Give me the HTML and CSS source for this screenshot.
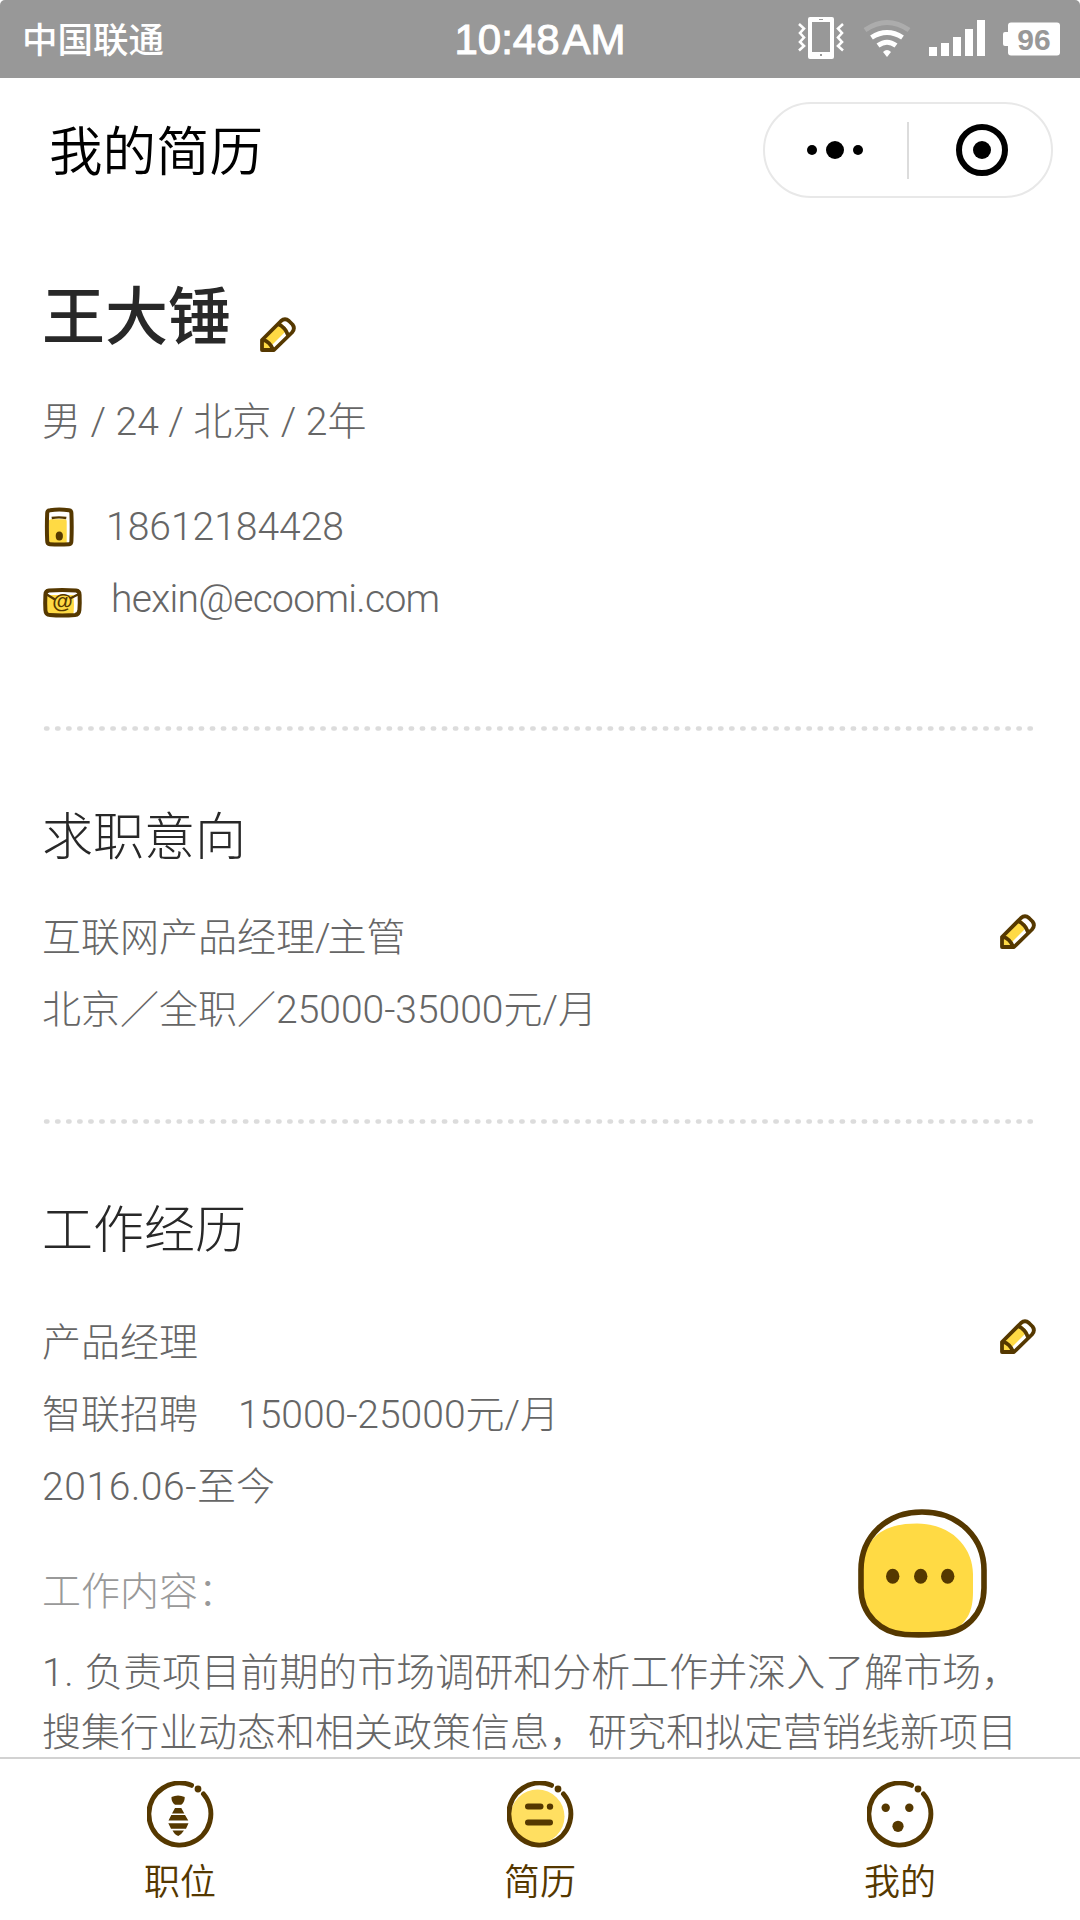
FILE: index.html
```html
<!DOCTYPE html>
<html lang="zh-CN">
<head>
  <meta charset="UTF-8">
  <meta name="viewport" content="width=device-width, initial-scale=1.0">
  <title>我的简历</title>
  <link rel="stylesheet" href="styles.css">
</head>
<body>

  <!-- shared icons -->
  <svg class="defs" width="0" height="0">
    <symbol id="pencil" viewBox="0 0 38 38">
      <path d="M3 34V24L21 6L31 16L14 33Z" fill="#ffda44"/>
      <path d="M15 33L32 16L29 13L11 31Z" fill="#fff"/>
      <path d="M26 4L32 9L31 13L27 9Z" fill="#fff"/>
      <path d="M3 34V24L22 5Q26 1.500 30 5L33.500 8.500Q36.500 12.500 33 16.500L15 34ZM19 8Q26 11 29 19M4 23.500Q11 26 14 33.500" fill="none" stroke="#553800" stroke-width="3.800" stroke-linejoin="round"/>
    </symbol>
    <symbol id="ring" viewBox="0 0 68 68">
      <path d="M56.5 13A31 31 0 1 1 44.5 4.3" fill="none" stroke="#553800" stroke-width="5" stroke-linecap="round"/>
      <circle cx="51" cy="8" r="3.4" fill="#553800"/>
    </symbol>
  </svg>

  <div class="phone">
    <div class="status">
      <span class="carrier">中国联通</span>
      <span class="time">10:48<i></i>AM</span>
      <svg class="status-icons" width="264" height="78" viewBox="0 0 264 78">
        <path fill="#fff" fill-rule="evenodd" d="M10 17H32Q34 17 34 19V57Q34 59 32 59H10Q8 59 8 57V19Q8 17 10 17ZM12 22V52H30V22ZM19 19V20H23V19ZM20 54V56H22V54Z"/>
        <path d="M-1 24L4 28.500L0 33L4 37.500L0 42L4 46L-1 50.500M43 24L38 28.500L42 33L38 37.500L42 42L38 46L43 50.500" fill="none" stroke="#fff" stroke-width="2.600"/>
        <g fill="none" stroke="#fff" stroke-width="5">
          <path d="M65 30Q87 15 109 30" opacity=".2"/>
          <path d="M71.500 37.500Q87 27.500 102.500 37.500"/>
          <path d="M78 45.500Q87 39 96 45.500"/>
        </g>
        <path d="M83 52Q87 48 91 52L87 57Z" fill="#fff"/>
        <path fill="#fff" d="M129 47h8v9h-8zM141 43h8v13h-8zM153 37h8v19h-8zM165 29h8v27h-8zM177 20h8v36h-8z"/>
        <rect x="208" y="22.500" width="52" height="33" rx="3" fill="#fff"/>
        <rect x="203" y="32" width="8" height="14" rx="2" fill="#fff"/>
        <text class="battery" x="234" y="50" text-anchor="middle">96</text>
      </svg>
    </div>

    <header class="navbar">
      <h1>我的简历</h1>
      <div class="capsule">
        <svg width="48" height="20" viewBox="0 0 48 20">
          <circle cx="5" cy="10" r="5"/><circle cx="28" cy="10" r="9"/><circle cx="51" cy="10" r="5"/>
        </svg>
        <i class="split"></i>
        <svg width="52" height="52" viewBox="0 0 52 52">
          <circle cx="26" cy="26" r="23" fill="none" stroke="#000" stroke-width="6"/>
          <circle cx="26" cy="26" r="9"/>
        </svg>
      </div>
    </header>

    <main class="resume">
      <section class="profile">
        <div class="name">
          <h2>王大锤</h2>
          <svg class="edit"><use href="#pencil"/></svg>
        </div>
        <p class="meta">男 / 24 / 北京 / 2年</p>
        <p class="contact">
          <svg width="31" height="41" viewBox="0 0 31 41">
            <path d="M4.700 14Q5 12 8 12.300H20Q23 12 22.700 15V36H4.700Z" fill="#ffda44"/>
            <path d="M6 3.200Q15 2 25 3.200Q27.400 3.500 27.400 6Q28 20 27.400 34Q27.400 37 25 37.200Q15 38 6 37.200Q3.200 37 3.200 34Q2.600 20 3.200 6Q3.200 3.500 6 3.200Z" fill="none" stroke="#553800" stroke-width="4"/>
            <path d="M7.700 11Q15 9.800 22.300 11" fill="none" stroke="#553800" stroke-width="2.400"/>
            <ellipse cx="15.300" cy="29" rx="3.600" ry="4.500" fill="#553800"/>
          </svg>
          <span>18612184428</span>
        </p>
        <p class="contact mail">
          <svg width="41" height="32" viewBox="0 0 41 32">
            <path d="M4 8H31Q33 18 31 29H4Z" fill="#ffda44"/>
            <path d="M7 3.600Q20 2.600 34 3.600Q37.600 4 37.600 8Q38 16 37.400 23Q37 27.600 33 28Q20 29 8 28Q3.600 28 3.400 23Q3 16 3.400 8Q3.400 4 7 3.600Z" fill="none" stroke="#553800" stroke-width="4"/>
            <path d="M4 7L13 12.500M37 7L28 11.500" stroke="#553800" stroke-width="2.400"/>
            <text class="at" x="20.500" y="21" text-anchor="middle">@</text>
          </svg>
          <span>hexin@ecoomi.com</span>
        </p>
      </section>

      <svg class="divider"><line x1="4" y1="2.500" x2="993" y2="2.500"/></svg>

      <section class="intent">
        <h3>求职意向</h3>
        <div class="item">
          <div>
            <p>互联网产品经理<span class="slash">/</span>主管</p>
            <p>北京／全职／25000-35000元/月</p>
          </div>
          <svg class="edit"><use href="#pencil"/></svg>
        </div>
      </section>

      <svg class="divider"><line x1="4" y1="2.500" x2="993" y2="2.500"/></svg>

      <section class="work">
        <h3>工作经历</h3>
        <div class="item">
          <div>
            <p>产品经理</p>
            <p>智联招聘<span class="salary">15000-25000元/月</span></p>
            <p><span class="date">2016.06-</span>至今</p>
          </div>
          <svg class="edit"><use href="#pencil"/></svg>
        </div>
        <p class="label">工作内容：</p>
        <p class="desc"><span class="date">1. </span>负责项目前期的市场调研和分析工作并深入了解市场，<br>搜集行业动态和相关政策信息，研究和拟定营销线新项目</p>
      </section>
    </main>

    <!-- floating chat button -->
    <svg class="chat" width="131" height="131" viewBox="0 0 131 131">
      <path d="M65 4C104 4 127 32 127 62V80C127 107 108 125 82 126Q65 127.500 48 126.500C24 125 4 107 4 80V62C4 28 30 4 65 4Z" fill="#fff"/>
      <path d="M60 15.500C95 15.500 116 40 116 66V84C116 104 110 112 100 121Q65 127 48 125C26 124 6 104 6 80V52C12 26 30 15.500 60 15.500Z" fill="#ffda44"/>
      <path d="M65 4C104 4 127 32 127 62V80C127 107 108 125 82 126Q65 127.500 48 126.500C24 125 4 107 4 80V62C4 28 30 4 65 4Z" fill="none" stroke="#553800" stroke-width="5.600"/>
      <g fill="#553800"><ellipse cx="35.700" cy="68.300" rx="6.700" ry="7.500"/><ellipse cx="63.700" cy="68.300" rx="6.700" ry="7.500"/><ellipse cx="90.700" cy="68.300" rx="6.700" ry="7.500"/></g>
    </svg>

    <nav class="tabbar">
      <a>
        <svg width="68" height="68" viewBox="0 0 68 68">
          <use href="#ring"/>
          <path fill="#553800" d="M24.500 16Q31 13 37.700 16Q38 21 34.300 23.800H28Q24 21 24.500 16ZM28 27H34.300L37.300 32.500H25ZM24.300 34H38L41.300 39.500H21.500ZM21.300 42.200H41.500L39 47.700H24ZM25.500 49.500H37Q34 54 31.300 55Q28 54 25.500 49.500Z"/>
        </svg>
        <span>职位</span>
      </a>
      <a>
        <svg width="68" height="68" viewBox="0 0 68 68">
          <circle cx="30.500" cy="35.500" r="27" fill="#ffdf61"/>
          <use href="#ring"/>
          <g fill="#553800">
            <rect x="18" y="22.500" width="18.500" height="6" rx="3"/>
            <circle cx="43" cy="25.600" r="3.200"/>
            <rect x="18" y="38.500" width="28" height="6" rx="3"/>
          </g>
        </svg>
        <span>简历</span>
      </a>
      <a>
        <svg width="68" height="68" viewBox="0 0 68 68">
          <use href="#ring"/>
          <g fill="#553800"><circle cx="18.700" cy="26.700" r="4.200"/><circle cx="42.300" cy="26.700" r="4.200"/><circle cx="31" cy="45.300" r="5.600"/></g>
        </svg>
        <span>我的</span>
      </a>
    </nav>
  </div>

</body>
</html>
```
FILE: styles.css
```css
/* General Styling */
* {
  box-sizing: border-box;
  margin: 0;
  padding: 0;
}

body {
  background-color: #fff;
  color: #666;
  font-family: Roboto, "Noto Sans CJK SC", sans-serif;
  font-size: 39px;
  font-weight: 300;
}

svg {
  display: block;
  flex-shrink: 0;
}

.defs {
  position: absolute;
}

.phone {
  position: relative;
  display: flex;
  flex-direction: column;
  width: 1080px;
  height: 1920px;
  overflow: hidden;
}

/* Status bar */
.status {
  display: grid;
  grid-template-columns: 1fr auto 1fr;
  align-items: center;
  height: 78px;
  padding-left: 22px;
  background-color: #989898;
  border-radius: 5px 5px 0 0;
  color: #fff;
}

.carrier {
  padding-bottom: 3px;
  font-size: 35.5px;
  font-weight: 500;
}

.time {
  margin-left: -22px;
  padding-top: 2px;
  font-family: "Liberation Sans", sans-serif;
  font-size: 42px;
  font-weight: 500;
  -webkit-text-stroke: 1px #fff;
}

.time i {
  margin-left: 3px;
}

.status-icons {
  justify-self: end;
  margin-right: 16px;
  overflow: visible;
}

.battery {
  font-family: "Liberation Sans", sans-serif;
  font-size: 30px;
  font-weight: 700;
  fill: #989898;
}

/* Title bar */
.navbar {
  display: flex;
  align-items: center;
  justify-content: space-between;
  height: 144px;
  padding: 0 27px 0 49px;
}

.navbar h1 {
  padding-bottom: 6px;
  color: #000;
  font-size: 53.5px;
  font-weight: 350;
}

.capsule {
  display: flex;
  align-items: center;
  width: 290px;
  height: 96px;
  padding-left: 42px;
  border: 2px solid #e8e8e8;
  border-radius: 48px;
}

.capsule svg {
  overflow: visible;
}

.split {
  width: 2px;
  height: 57px;
  margin: 0 47px 0 52px;
  background-color: #dcdcdc;
}

/* Resume */
.resume {
  height: 1535px;
  padding: 57px 43px 0 42px;
  overflow: hidden;
}

.resume p {
  line-height: 72px;
}

.edit {
  width: 38px;
  height: 38px;
}

.profile {
  height: 447px;
}

.name {
  display: flex;
  align-items: flex-end;
}

.name h2 {
  color: #282828;
  font-size: 63px;
  font-weight: 500;
  line-height: 78px;
}

.name .edit {
  margin: 0 0 3px 28px;
}

.resume .meta {
  margin: 29px 0 33px;
}

.contact {
  display: flex;
  align-items: center;
}

.contact svg {
  margin: 0 31px 0 2px;
}

.mail svg {
  margin: 8px 28px 0 0;
}

.mail {
  letter-spacing: -0.7px;
}

.at {
  font-family: "Liberation Sans", sans-serif;
  font-size: 21px;
  font-weight: 700;
  letter-spacing: 0;
  fill: #553800;
}

.divider {
  width: 995px;
  height: 5px;
}

.divider line {
  stroke: #dcdcdc;
  stroke-width: 4.4;
  stroke-linecap: round;
  stroke-dasharray: 1.5 9.55;
}

h3 {
  color: #282828;
  font-size: 51px;
  font-weight: 300;
  line-height: 72px;
}

.intent {
  height: 388px;
  padding-top: 71px;
}

.work {
  padding-top: 71px;
}

.item {
  display: flex;
  justify-content: space-between;
  margin-top: 28px;
}

.work .item {
  margin-top: 40px;
}

.item .edit {
  margin-top: 11px;
}

.slash {
  letter-spacing: -3px;
}

.date {
  letter-spacing: 0.6px;
}

.salary {
  margin-left: 40px;
}

.resume .label {
  margin-top: 33px;
  color: #999;
}

.resume .desc {
  margin-top: 15px;
  line-height: 60px;
  white-space: nowrap;
}

/* Chat button */
.chat {
  position: absolute;
  top: 1508px;
  left: 857px;
}

/* Tab bar */
.tabbar {
  display: grid;
  grid-template-columns: repeat(3, 1fr);
  height: 163px;
  border-top: 2px solid #d2d2d2;
  background-color: #fff;
}

.tabbar a {
  display: flex;
  flex-direction: column;
  align-items: center;
  gap: 11px;
  padding-top: 22px;
  color: #553800;
  font-size: 36px;
  font-weight: 350;
  line-height: 46px;
}

.tabbar svg {
  margin-left: 2px;
}
```
